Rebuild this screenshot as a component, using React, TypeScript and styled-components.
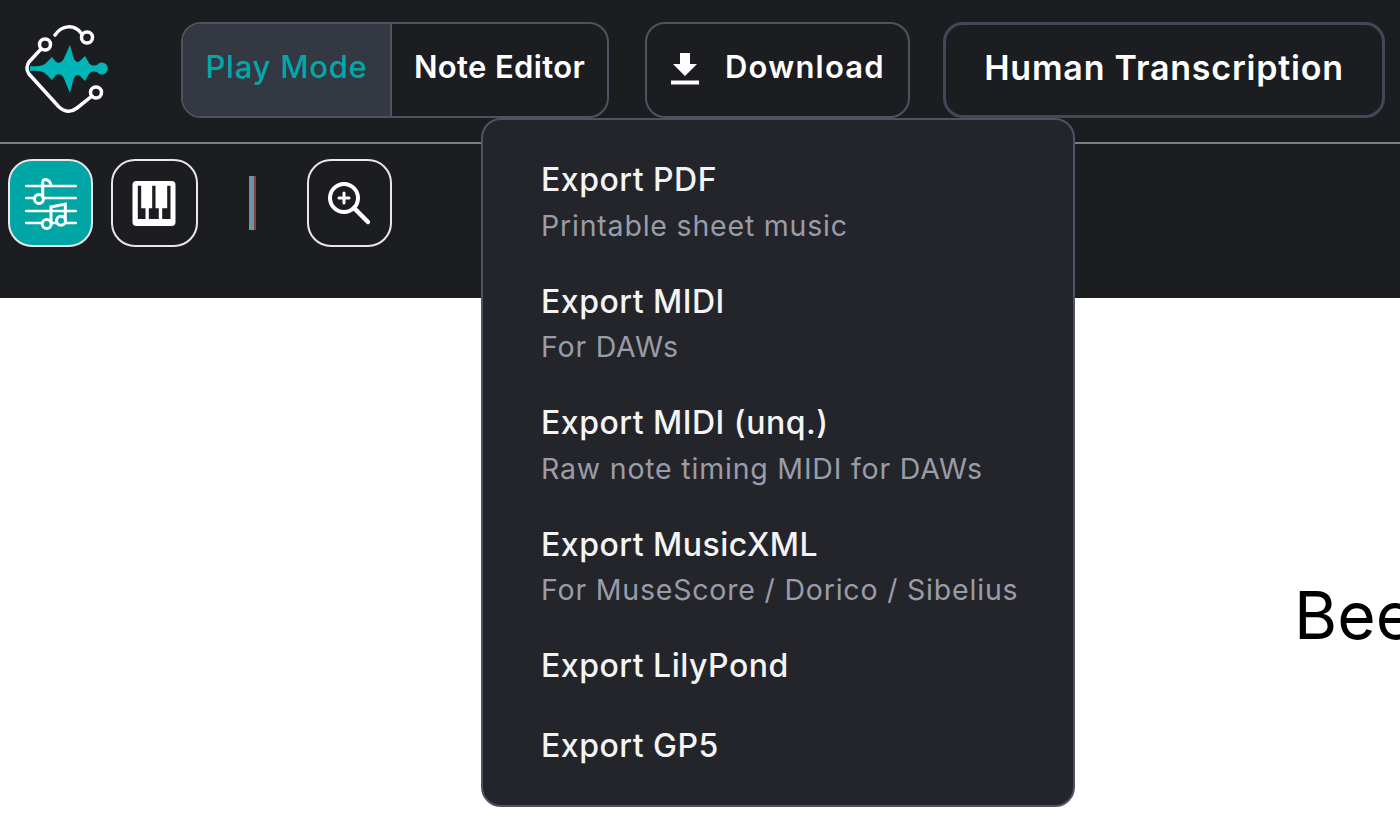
import styled, { createGlobalStyle } from "styled-components"

const GlobalStyle = createGlobalStyle`
    html, body {
        margin: 0;
        padding: 0;
        background: #fff;
    }
    body {
        font-family: "Inter", "Liberation Sans", sans-serif;
    }
    * { box-sizing: border-box; }
`
const Page = styled.div`
    position: relative;
    width: 1400px;
    height: 828px;
    overflow: hidden;
    background: #fff;
`
const TopBar = styled.header`
    display: flex;
    align-items: flex-start;
    height: 144px;
    padding: 22px 15px 0 24px;
    background: #1c1d21;
    border-bottom: 2px solid #7c7e84;
`
const LogoBox = styled.div`
    width: 84px;
    height: 96px;
    margin-right: 73px;
    flex-shrink: 0;
`
const Segmented = styled.div`
    display: flex;
    width: 428px;
    height: 96px;
    border: 2px solid #4d5361;
    border-radius: 20px;
    overflow: hidden;
    margin-right: 36px;
`
const Segment = styled.div<{ $active?: boolean, $width: number }>`
    display: flex;
    align-items: center;
    justify-content: center;
    width: ${props => props.$width}px;
    padding-bottom: 8px;
    font-size: 31px;
    font-weight: ${props => props.$active ? 500 : 600};
    letter-spacing: ${props => props.$active ? 0.75 : 0.35}px;
    white-space: nowrap;
    color: ${props => props.$active ? '#00a8a8' : '#fff'};
    background: ${props => props.$active ? '#333842' : 'transparent'};
    border-right: ${props => props.$active ? '2px solid #4d5361' : 'none'};
`
const DownloadButton = styled.div`
    display: flex;
    align-items: center;
    width: 265px;
    height: 96px;
    padding-left: 24px;
    gap: 26px;
    margin-right: 33px;
    border: 2px solid #4d5361;
    border-radius: 20px;
    color: #fff;
    font-size: 31px;
    font-weight: 600;
    letter-spacing: 1.2px;
`
const DownloadLabel = styled.span`
    margin-bottom: 8px;
`
const HumanButton = styled.div`
    display: flex;
    align-items: center;
    justify-content: center;
    width: 442px;
    height: 96px;
    padding-bottom: 6px;
    border: 3px solid #434856;
    border-radius: 20px;
    color: #fff;
    font-size: 34px;
    font-weight: 600;
    letter-spacing: 0.8px;
`
const ToolBar = styled.div`
    display: flex;
    align-items: flex-start;
    height: 154px;
    padding: 15px 0 0 8px;
    background: #1c1d21;
`
const ToolButton = styled.div<{ $active?: boolean, $width: number }>`
    display: flex;
    align-items: center;
    justify-content: center;
    width: ${props => props.$width}px;
    height: 88px;
    border: 2px solid #e8e8e8;
    border-radius: 24px;
    background: ${props => props.$active ? '#00a6a6' : 'transparent'};
`
const ToolGap = styled.div`
    width: 18px;
`
const Divider = styled.div`
    width: 7px;
    height: 54px;
    margin: 17px 51px 0 51px;
    background: linear-gradient(90deg, #6e93a8 0 70%, #8a3f3f 70% 100%);
`
const Content = styled.main`
    padding: 281px 0 0 1294px;
`
const Title = styled.h1`
    margin: 0;
    font-size: 66px;
    font-weight: 400;
    line-height: 72px;
    color: #000;
    white-space: nowrap;
`
const Menu = styled.div`
    position: absolute;
    left: 481px;
    top: 118px;
    width: 594px;
    height: 689px;
    padding: 38px 0 0 58px;
    background: #24252b;
    border: 2px solid #4d5361;
    border-radius: 20px;
`
const MenuItem = styled.div<{ $hasSub: boolean }>`
    height: ${props => props.$hasSub ? 121.5 : 80}px;
`
const MenuTitle = styled.div`
    font-size: 32px;
    font-weight: 500;
    line-height: 44px;
    letter-spacing: 0.5px;
    color: #f4f4f5;
`
const MenuSub = styled.div`
    margin-top: 1.5px;
    font-size: 28.5px;
    line-height: 44px;
    letter-spacing: 0.8px;
    color: #9a9ca8;
`

const menuItems = [
    { title: 'Export PDF', sub: 'Printable sheet music' },
    { title: 'Export MIDI', sub: 'For DAWs' },
    { title: 'Export MIDI (unq.)', sub: 'Raw note timing MIDI for DAWs' },
    { title: 'Export MusicXML', sub: 'For MuseScore / Dorico / Sibelius' },
    { title: 'Export LilyPond' },
    { title: 'Export GP5' },
]

const Logo = () => (
    <svg width="84" height="96" viewBox="24 22 84 96" fill="none">
        <g stroke="#fff" strokeWidth="3.5" strokeLinecap="round" strokeLinejoin="round">
            <circle cx="45" cy="44.500" r="5.500" />
            <circle cx="87" cy="37.500" r="5.500" />
            <circle cx="96" cy="92.500" r="5.500" />
            <path d="M55 35 C62 25 74 24 81 33" />
            <path d="M41 49 L29 62 Q25 68 29 74 L59 107 Q68 115 77 108 L92 96" />
        </g>
        <path
            d="M30 66 C38 67 44 66 47 62 L52 57 L56 62 C60 64 63 62 65 56 L70 45 L73 56 C75 63 78 63 81 60 L85 56 L89 63 C91 66 94 66 97 65 A6 6 0 1 1 97 72 C94 71 91 71 89 74 L85 81 L81 77 C78 74 75 74 73 81 L70 93 L65 81 C63 75 60 73 56 75 L52 80 L47 75 C44 71 38 70 30 71 Z"
            fill="#00b5b8"
        />
    </svg>
)

const DownloadIcon = () => (
    <svg width="28" height="34" viewBox="0 0 28 34" fill="#fff">
        <path d="M9 0 H19 V11 H26 L14 23 L2 11 H9 Z" />
        <rect x="0" y="27.500" width="28" height="4" />
    </svg>
)

const ScoreIcon = () => (
    <svg width="52" height="56" viewBox="0 0 52 56" fill="none" stroke="#fff" strokeWidth="2.500" strokeLinecap="round">
        <path d="M1 11 H51 M1 23 H51 M1 36 H51 M1 48 H51" />
        <circle cx="14" cy="24" r="4.500" fill="#00a6a6" strokeWidth="3" />
        <path d="M17.700 22 V7 C18 3 25 4 26 10.500" strokeWidth="3" />
        <circle cx="21.700" cy="49" r="4.500" fill="#00a6a6" strokeWidth="3" />
        <circle cx="36" cy="45.700" r="4.500" fill="#00a6a6" strokeWidth="3" />
        <path d="M26 47 V32 L40.300 29 V44" strokeWidth="3" />
    </svg>
)

const PianoIcon = () => (
    <svg width="46" height="46" viewBox="0 0 46 46">
        <rect x="0.500" y="1" width="43" height="45" rx="4" fill="#fff" />
        <g fill="#1c1d21">
            <path d="M5.800 5.700 H9.200 V28.300 H13.500 V39 H5.800 Z" />
            <path d="M20.200 5.700 H23.500 V28.300 H26.800 V39 H16.800 V28.300 H20.200 Z" />
            <path d="M35.200 5.700 H38.500 V39 H30.200 V28.300 H35.200 Z" />
        </g>
    </svg>
)

const ZoomIcon = () => (
    <svg width="46" height="46" viewBox="0 0 46 46" fill="none" stroke="#fff" strokeLinecap="round">
        <circle cx="17" cy="18" r="14" strokeWidth="4" />
        <path d="M12 18 H22 M17 13 V23" strokeWidth="3" />
        <path d="M27 28 L41 42" strokeWidth="4.500" />
    </svg>
)

const App = () => {
    return (
        <Page>
            <GlobalStyle />
            <TopBar>
                <LogoBox><Logo /></LogoBox>
                <Segmented>
                    <Segment $active $width={209}>Play Mode</Segment>
                    <Segment $width={215}>Note Editor</Segment>
                </Segmented>
                <DownloadButton>
                    <DownloadIcon />
                    <DownloadLabel>Download</DownloadLabel>
                </DownloadButton>
                <HumanButton>Human Transcription</HumanButton>
            </TopBar>
            <ToolBar>
                <ToolButton $active $width={85}><ScoreIcon /></ToolButton>
                <ToolGap />
                <ToolButton $width={87}><PianoIcon /></ToolButton>
                <Divider />
                <ToolButton $width={85}><ZoomIcon /></ToolButton>
            </ToolBar>
            <Content>
                <Title>Beethoven</Title>
            </Content>
            <Menu>
                {menuItems.map(item =>
                    <MenuItem key={item.title} $hasSub={!!item.sub}>
                        <MenuTitle>{item.title}</MenuTitle>
                        {item.sub && <MenuSub>{item.sub}</MenuSub>}
                    </MenuItem>
                )}
            </Menu>
        </Page>
    )
}

export default App
